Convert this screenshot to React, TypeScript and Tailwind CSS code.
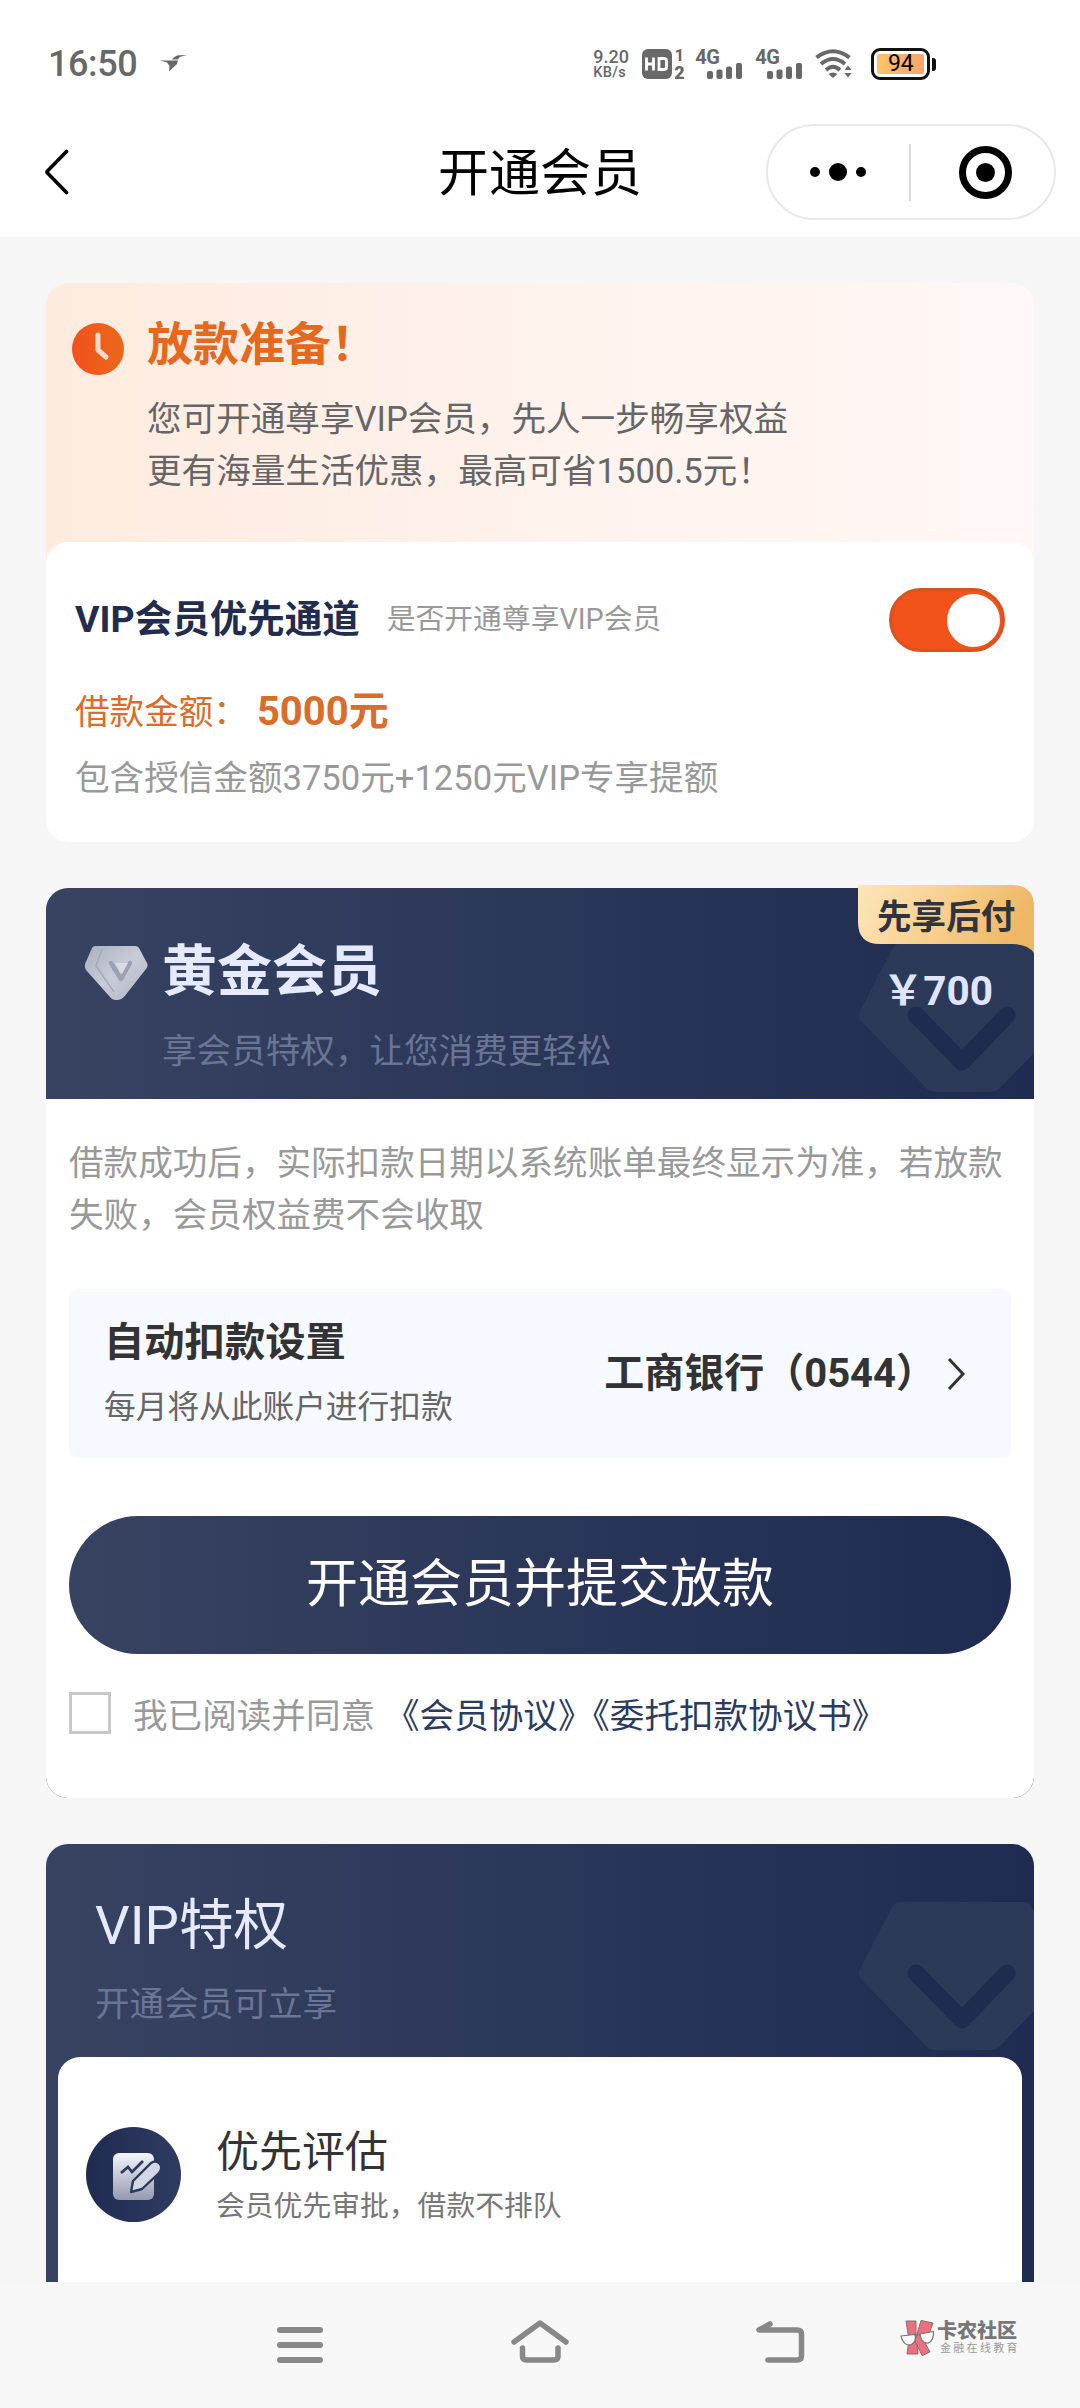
import React, { useState } from "react";

const agreements = ["会员协议", "委托扣款协议书"];

const privileges = [
  { id: 1, title: "优先评估", text: "会员优先审批，借款不排队" },
];

function SignalIcon() {
  return (
    <div className="relative h-[30px] w-[48px] text-[#686868]">
      <span className="absolute -top-[2px] left-0 text-[20px] leading-[20px] font-bold tracking-[-0.5px]">
        4G
      </span>
      <svg width="48" height="30" viewBox="0 0 48 30" fill="currentColor">
        <rect x="12" y="22" width="6" height="8" rx="2" />
        <rect x="21.500" y="20.500" width="6" height="9.500" rx="2" />
        <rect x="31" y="17.500" width="6" height="12.500" rx="2" />
        <rect x="41" y="14" width="6" height="16" rx="2" />
      </svg>
    </div>
  );
}

function StatusBar() {
  return (
    <div className="flex h-[124px] items-center pt-1 pl-[48px] text-[#686868]">
      <span className="text-[36px] leading-[36px] font-medium tracking-[-0.4px]">
        16:50
      </span>
      <svg className="-mt-0.5 ml-[23px]" width="27" height="17" viewBox="0 0 27 17" fill="#686868">
        <path d="M0 5.500 H18 L17 9 L9 16.500 L9.500 11 L7 7.500 Z" />
        <path d="M12 4.500 Q15 0.500 19 0.300 L27 0 L21 1.600 Q18.500 2.500 18 4.500 Z" />
      </svg>
      <div className="ml-[406px] flex w-[37px] flex-col">
        <span className="text-[18px] leading-[17px] font-medium">9.20</span>
        <span className="text-[14.500px] leading-[15px] font-medium tracking-[0.300px]">KB/s</span>
      </div>
      <svg className="ml-[12px]" width="30" height="30" viewBox="0 0 30 30">
        <rect width="30" height="30" rx="6" fill="#686868" />
        <path
          d="M4.500 8.500 V21.500 M11.500 8.500 V21.500 M4.500 15 H11.500 M17 9.500 H22 Q24.500 9.500 24.500 12 V18 Q24.500 20.500 22 20.500 H17 Z"
          fill="none"
          stroke="#fff"
          strokeWidth="2.800"
        />
      </svg>
      <div className="ml-[1px] flex h-[32px] w-[12px] flex-col items-center justify-between text-[17px] leading-[15px] font-bold">
        <span>1</span>
        <span className="text-[18px] font-black">2</span>
      </div>
      <div className="ml-[10px] flex gap-[12px]">
        <SignalIcon />
        <SignalIcon />
      </div>
      <svg className="ml-[12px]" width="38" height="30" viewBox="0 0 38 30" fill="none" stroke="#686868">
        <path d="M1.500 8.500 Q18 -4 34.500 8.500" strokeWidth="4" />
        <path d="M6 15 Q18 5 30 15" strokeWidth="4" />
        <path d="M11 21 Q18 14.500 25 21" strokeWidth="4" />
        <path d="M13.500 25 Q18 22 22.500 25 L18 29 Z" fill="#686868" stroke="none" />
        <path d="M33 16.500 L36.500 21 H29.500 Z M33 28.500 L36.500 24 H29.500 Z" fill="#686868" stroke="none" />
      </svg>
      <div className="ml-[18px] flex h-[32px] w-[59px] items-center justify-center rounded-[9px] border-[3px] border-[#111] p-[3px]">
        <div className="flex h-full w-full items-center justify-center rounded-[2px] bg-gradient-to-r from-[#fbc36b] to-[#f6a56d] text-[23px] leading-[20px] text-black">
          94
        </div>
      </div>
      <div className="ml-[2px] h-[13px] w-[4px] rounded-r-[3px] bg-[#111]" />
    </div>
  );
}

function TitleBar() {
  return (
    <div className="grid h-[113px] grid-cols-3 items-start">
      <svg className="mt-[25px] ml-[44px]" width="26" height="46" viewBox="0 0 26 46" fill="none">
        <path
          d="M22.500 2.500 L3.500 22 Q2.500 23 3.500 24 L22.500 43.500"
          stroke="#000"
          strokeWidth="3.600"
          strokeLinecap="round"
        />
      </svg>
      <h1 className="text-center text-[51px] leading-[100px] text-black">开通会员</h1>
      <div className="mr-6 flex h-[96px] w-[290px] items-center justify-self-end rounded-full border-2 border-[#e8e8e8] pl-[42px]">
        <div className="flex w-[56px] items-center justify-between">
          <i className="size-[10px] rounded-full bg-black" />
          <i className="size-[18px] rounded-full bg-black" />
          <i className="size-[10px] rounded-full bg-black" />
        </div>
        <div className="ml-[43px] h-[57px] w-[2px] bg-[#dcdcdc]" />
        <div className="ml-[48px] flex size-[53px] items-center justify-center rounded-full border-[7px] border-black">
          <i className="size-[19px] rounded-full bg-black" />
        </div>
      </div>
    </div>
  );
}

// big faded gem in the right corner of the dark headers
function GemWatermark() {
  return (
    <svg className="absolute right-0 bottom-[6px]" width="176" height="150" viewBox="0 0 176 150">
      <path
        d="M41 1 H165 Q170 1 172 4 L176 10 V110 L141 146 Q137 149 133 149 H76 Q72 149 69 146 L2 77 Q0 74 1 70 L34 6 Q37 1 41 1 Z"
        fill="#2d3959"
      />
      <path
        d="M58 72 L104 119 L149 72"
        fill="none"
        stroke="#1f2c50"
        strokeWidth="17"
        strokeLinecap="round"
        strokeLinejoin="round"
      />
    </svg>
  );
}

function GemIcon() {
  return (
    <svg width="64" height="54" viewBox="0 0 64 54">
      <defs>
        <linearGradient id="gem" x1="0" y1="0" x2="1" y2="1">
          <stop offset="0" stopColor="#a9afbc" />
          <stop offset="0.500" stopColor="#c8ccd8" />
          <stop offset="1" stopColor="#b0b5c2" />
        </linearGradient>
      </defs>
      <path d="M11 0 H51 Q54 0 55 2 L63.500 18 Q64 21 62 23 L40 51 Q37 54 34 54 H31 Q28 54 26 51 L2 24 Q0 21 1 18 L8 2 Q9 0 11 0 Z" fill="url(#gem)" />
      <path d="M18 3 L12 20 L30 46" fill="none" stroke="#a3a9b8" strokeWidth="1.500" />
      <path d="M27 17 L37 33 L46 17" fill="none" stroke="#9ba1b0" strokeWidth="4.500" strokeLinecap="round" strokeLinejoin="round" />
      <path d="M31 17 L38 28 L44 17" fill="#d8dae5" />
    </svg>
  );
}

function LoanCard() {
  const [enabled, setEnabled] = useState(true);

  return (
    <section className="overflow-hidden rounded-[22px] bg-gradient-to-r from-[#feebdf] via-[#fef2ec] to-[#fff8f6]">
      <div className="flex h-[259px] items-start pl-[26px]">
        <svg className="mt-[40px]" width="52" height="52" viewBox="0 0 52 52">
          <defs>
            <linearGradient id="clock" x1="0" y1="0" x2="1" y2="0">
              <stop offset="0" stopColor="#f4511c" />
              <stop offset="1" stopColor="#e8691b" />
            </linearGradient>
          </defs>
          <circle cx="26" cy="26" r="26" fill="url(#clock)" />
          <path d="M26 12 V27 L34 34" fill="none" stroke="#fdd9c8" strokeWidth="5" strokeLinecap="round" strokeLinejoin="round" />
        </svg>
        <div className="ml-[23px] pt-[30px]">
          <h2 className="text-[46px] leading-[62px] font-bold text-[#e5691d]">放款准备！</h2>
          <p className="mt-[18px] text-[34.600px] leading-[52px] text-[#666]">
            您可开通尊享VIP会员，先人一步畅享权益
            <br />
            更有海量生活优惠，最高可省1500.5元！
          </p>
        </div>
      </div>
      <div className="h-[300px] rounded-t-[22px] bg-white pt-[46px] pr-[29px] pl-[29px]">
        <div className="flex h-[64px] items-center">
          <h3 className="-mt-[2px] text-[37.500px] font-bold text-[#212c4e]">VIP会员优先通道</h3>
          <span className="ml-[27px] text-[28.800px] text-[#999]">是否开通尊享VIP会员</span>
          <button
            type="button"
            onClick={() => setEnabled(!enabled)}
            className={
              enabled
                ? "ml-auto flex h-[64px] w-[116px] items-center justify-end rounded-full border-[3px] border-[#d9531f] bg-[#f1531a] pr-[2px]"
                : "ml-auto flex h-[64px] w-[116px] items-center rounded-full border-[3px] border-gray-300 bg-gray-200 pl-[2px]"
            }
          >
            <i className="size-[53px] rounded-full bg-white" />
          </button>
        </div>
        <div className="mt-[32px] flex h-[56px] items-center text-[#d96d29]">
          <span className="mt-[2px] text-[34.600px]">借款金额：</span>
          <span className="ml-[9px] text-[40px] font-bold">5000元</span>
        </div>
        <p className="mt-[12px] text-[34.600px] leading-[52px] text-[#999]">
          包含授信金额3750元+1250元VIP专享提额
        </p>
      </div>
    </section>
  );
}

function MemberCard() {
  const [checked, setChecked] = useState(false);

  return (
    <section className="mt-[46px] rounded-[22px] bg-gradient-to-r from-[#384362] to-[#1f2b50]">
      <div className="relative h-[211px]">
        <GemWatermark />
        <div className="flex pt-[46px] pl-[38px]">
          <div className="mt-[12px]">
            <GemIcon />
          </div>
          <div className="ml-[14px]">
            <h2 className="text-[55px] leading-[74px] font-bold text-[#e6eaff]">黄金会员</h2>
            <p className="mt-[17px] text-[34.600px] leading-[52px] text-[#6a7595]">享会员特权，让您消费更轻松</p>
          </div>
        </div>
        {/* corner ribbon */}
        <div className="absolute -top-[3px] right-0 h-[68px] w-[176px]">
          <svg className="absolute inset-0" width="176" height="68" viewBox="0 0 176 68">
            <defs>
              <linearGradient id="ribbon" x1="0" y1="0" x2="1" y2="0.200">
                <stop offset="0" stopColor="#fde5ba" />
                <stop offset="0.500" stopColor="#f8d191" />
                <stop offset="1" stopColor="#eeb765" />
              </linearGradient>
            </defs>
            {/* page colour behind the ribbon's rounded top corner */}
            <path d="M150 0 H176 V40 H150 Z" fill="#f6f6f6" />
            <path d="M0 0 H154 Q176 0 176 22 V68 Q170 59 154 59 H22 Q0 59 0 37 Z" fill="url(#ribbon)" />
          </svg>
          <span className="relative block pl-[19px] text-[34.600px] leading-[64px] font-bold text-[#2f3440]">
            先享后付
          </span>
        </div>
        <span className="absolute top-[77px] right-[41px] text-[40.500px] leading-[52px] font-bold text-[#dfe5ff]">
          ￥700
        </span>
      </div>
      <div className="h-[699px] rounded-b-[22px] bg-white px-[23px]">
        <p className="pt-[38px] text-[34.600px] leading-[52px] text-[#999]">
          借款成功后，实际扣款日期以系统账单最终显示为准，若放款失败，会员权益费不会收取
        </p>
        <div className="mt-[48px] flex h-[169px] items-center justify-between rounded-[8px] bg-[#f6f9ff] pr-[45px] pl-[35px]">
          <div>
            <h3 className="text-[40.300px] leading-[60px] font-bold text-[#333]">自动扣款设置</h3>
            <p className="mt-[9px] text-[31.700px] leading-[52px] text-[#666]">每月将从此账户进行扣款</p>
          </div>
          <div className="flex items-center">
            <span className="text-[40px] leading-[60px] font-bold text-[#333]">工商银行（0544）</span>
            <svg className="ml-[10px]" width="20" height="34" viewBox="0 0 20 34" fill="none">
              <path d="M3 2 L17 17 L3 32" stroke="#333" strokeWidth="3" />
            </svg>
          </div>
        </div>
        <button
          type="button"
          className="mt-[58px] block h-[138px] w-full rounded-full bg-gradient-to-r from-[#384362] to-[#1f2b50] text-center text-[52px] text-white"
        >
          开通会员并提交放款
        </button>
        <div className="mt-[33px] flex h-[52px] items-center text-[34.600px]">
          <button
            type="button"
            onClick={() => setChecked(!checked)}
            className={checked ? "size-[42px] bg-[#2c3a5e]" : "size-[42px] border-[3px] border-[#c8c8c8]"}
          />
          <p className="mt-[8px] ml-[22px] text-[#999]">
            我已阅读并同意
            <span className="ml-[10px] text-[#2c3a5e]">
              {agreements.map((name) => `《${name}》`).join("")}
            </span>
          </p>
        </div>
      </div>
    </section>
  );
}

function PrivilegeIcon() {
  return (
    <svg width="95" height="95" viewBox="0 0 95 95">
      <defs>
        <linearGradient id="disc" x1="0" y1="0" x2="1" y2="0">
          <stop offset="0" stopColor="#1f2b50" />
          <stop offset="1" stopColor="#2f3b61" />
        </linearGradient>
        <linearGradient id="sheet" x1="0" y1="0" x2="0" y2="1">
          <stop offset="0" stopColor="#f4f5fa" />
          <stop offset="1" stopColor="#9399b0" />
        </linearGradient>
      </defs>
      <circle cx="47.500" cy="47.500" r="47.500" fill="url(#disc)" />
      <rect x="27" y="26" width="41" height="47" rx="6" fill="url(#sheet)" />
      <path d="M35 46 L42 40 L46 45 L57 34" fill="none" stroke="#2c385d" strokeWidth="2.800" />
      <path
        d="M45 65 L47 54 L65 36 Q70 32.500 74 37 Q77 41 73 46 L56 62 Z"
        fill="#d3d6e3"
        stroke="#2c385d"
        strokeWidth="2.400"
        strokeLinejoin="round"
      />
    </svg>
  );
}

function PrivilegeCard() {
  return (
    <section className="mt-[46px] h-[438px] rounded-t-[22px] bg-gradient-to-r from-[#384362] to-[#1f2b50] px-[12px]">
      <div className="relative -mx-[12px] h-[213px] pt-[44px] pl-[49px]">
        <GemWatermark />
        <h2 className="text-[54.500px] leading-[74px] text-[#e6eaff]">VIP特权</h2>
        <p className="mt-[16px] text-[34.600px] leading-[52px] text-[#6a7595]">开通会员可立享</p>
      </div>
      <div className="h-[225px] rounded-t-[22px] bg-white pt-[64px] pl-[28px]">
        {privileges.map((item) => (
          <div key={item.id} className="flex">
            <div className="mt-[6px]">
              <PrivilegeIcon />
            </div>
            <div className="-mt-px ml-[35px]">
              <h3 className="text-[43px] leading-[64px] text-[#333]">{item.title}</h3>
              <p className="text-[28.800px] leading-[44px] text-[#777]">{item.text}</p>
            </div>
          </div>
        ))}
      </div>
    </section>
  );
}

function BrandMark() {
  return (
    <div className="flex items-center">
      <svg width="35" height="37" viewBox="0 0 35 37">
        <g fill="#ee6f7d" stroke="#8a6a6e" strokeWidth="1">
          <path d="M6 1 H16 V20 L18 34 H7 L9 20 Z" />
          <path d="M21 0.500 L33 3 L29 14 L23 19 L30 32 L22 35.500 L15 21 Z" />
        </g>
        <g fill="#fff" stroke="#777" strokeWidth="1.200">
          <path d="M1 16 L15 14.500 Q16.500 22 11.500 24.500 Q4 27 1 16 Z" />
          <path d="M20 14 L33.500 11.500 Q34 20 28.500 23 Q21.500 24 20 14 Z" />
          <path d="M15 15.500 Q17.500 13.500 20 15" fill="none" />
        </g>
      </svg>
      <div className="ml-[2px]">
        <div className="text-[20px] leading-[21px] font-black text-[#777]">卡农社区</div>
        <div className="pl-[3px] text-[11px] leading-[14px] tracking-[2.300px] whitespace-nowrap text-[#999]">
          金融在线教育
        </div>
      </div>
    </div>
  );
}

function SystemNav() {
  return (
    <nav className="flex h-[126px] items-start bg-[#f7f7f7] pt-[38px] pl-[277px]">
      <svg width="46" height="44" viewBox="0 0 46 44" fill="#888">
        <rect y="7" width="46" height="6" rx="3" />
        <rect y="22" width="46" height="6" rx="3" />
        <rect y="37" width="46" height="6" rx="3" />
      </svg>
      <svg className="ml-[187px]" width="60" height="44" viewBox="0 0 60 44" fill="none" stroke="#888" strokeWidth="5.500" strokeLinecap="round" strokeLinejoin="round">
        <path d="M4 22 L30 3 L56 22" />
        <path d="M12.500 28 V36 Q12.500 40 16.500 40 H44 Q48 40 48 36 V28" />
      </svg>
      <svg className="ml-[185px]" width="50" height="44" viewBox="0 0 50 44" fill="none" stroke="#888" strokeWidth="5.500" strokeLinecap="round" strokeLinejoin="round">
        <path d="M15 4 L4 10 H42 Q46.500 10 46.500 14 V36 Q46.500 40 42 40 H13" />
      </svg>
      <div className="ml-[95px]">
        <BrandMark />
      </div>
    </nav>
  );
}

export default function App() {
  return (
    <div className="h-[2408px] w-[1080px] overflow-hidden bg-[#f6f6f6] font-['Roboto','Noto_Sans_CJK_SC',sans-serif]" lang="zh-CN">
      <header className="bg-white">
        <StatusBar />
        <TitleBar />
      </header>
      <main className="px-[46px] pt-[46px]">
        <LoanCard />
        <MemberCard />
        <PrivilegeCard />
      </main>
      <SystemNav />
    </div>
  );
}
